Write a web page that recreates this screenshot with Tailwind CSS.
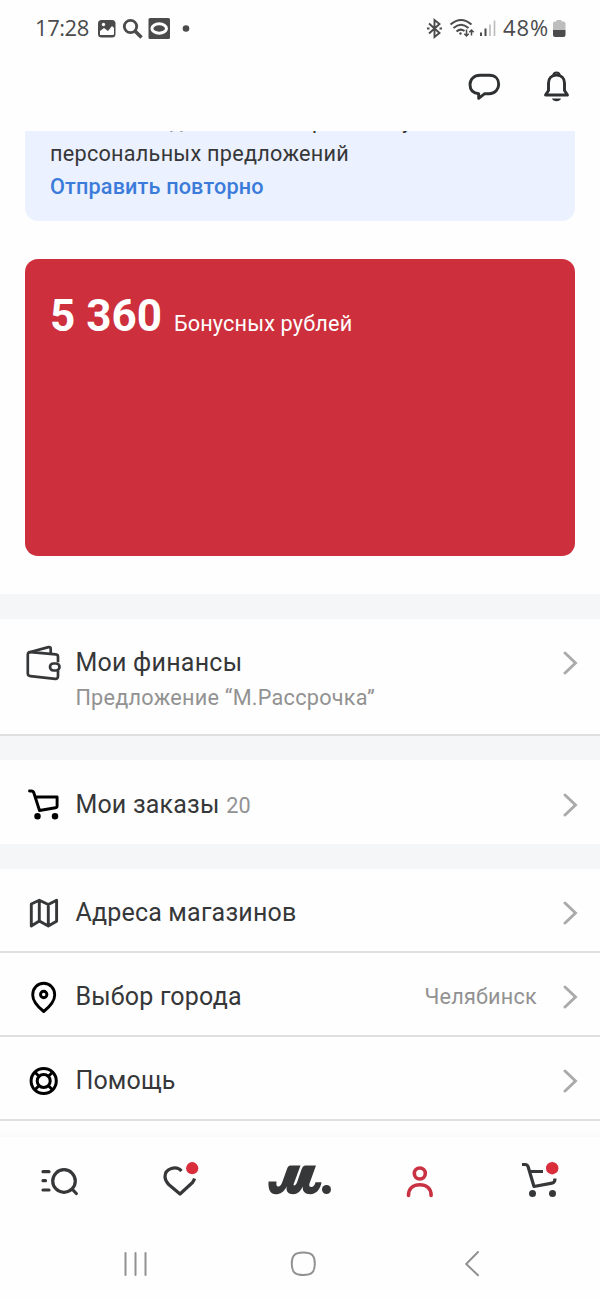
<!DOCTYPE html>
<html lang="ru"><head><meta charset="utf-8"><title>Профиль</title>
<script src="https://cdn.jsdelivr.net/npm/@tailwindcss/browser@4"></script></head>
<body class="bg-[#fefefe]">
<div class="w-[600px] h-[1299px] overflow-hidden flex flex-col font-['Roboto',sans-serif] text-[#363739]">
  <header class="h-[131px] shrink-0">
    <div class="h-14 pt-px flex items-center justify-between pl-[35px] pr-[33px] text-[#4b4b4c]">
      <div class="flex items-center">
        <span class="w-[54px] -mt-[3px] whitespace-nowrap font-['Open_Sans',sans-serif] text-[22px] leading-7 tracking-[-0.45px]">17:28</span>
        <svg class="ml-2 w-[94px] h-7" viewBox="97 15 94 28" fill="none">
          <rect x="98" y="20" width="17.5" height="17.5" rx="3.5" fill="#4b4b4c"/>
          <path d="M100 35V31l4-3 4 3 4-5 2 2v6q0 1-1 1z" fill="#fefefe"/><circle cx="103.500" cy="24.500" r="1.700" fill="#fefefe"/>
          <circle cx="130.500" cy="26.500" r="6.200" stroke="#4b4b4c" stroke-width="2.800"/><path d="M135 31l6.500 6.500" stroke="#4b4b4c" stroke-width="3.600"/>
          <rect x="148.500" y="18" width="21.500" height="21" rx="1.500" fill="#4b4b4c"/>
          <ellipse cx="159.200" cy="28.500" rx="7.300" ry="4.700" stroke="#fefefe" stroke-width="3"/>
          <circle cx="186" cy="28.500" r="3.300" fill="#4b4b4c"/>
        </svg>
      </div>
      <div class="flex items-center">
        <svg class="w-[76px] h-7" viewBox="426 15 76 28" fill="none" stroke="#4b4b4c" stroke-width="1.900">
          <path d="M429 23.500l10.500 9.500-5 4v-17l5 4-10.500 9.500"/><path d="M427 28.500h2.500M439.500 28.500h2.500"/>
          <path d="M450.500 24.500q10.500-9 21 0M453.500 28q7.500-6.500 15 0M456.500 31.500q4-3.500 8-.5" stroke-width="2"/><circle cx="460.500" cy="33.500" r="1.200" fill="#4b4b4c" stroke="none"/>
          <path d="M466.500 29.500v6.500m-2.200-2.200l2.200 2.200 2.200-2.200M471.500 35.500V30m-2.200 2.200l2.200-2.200 2.200 2.200" stroke-width="1.500"/>
          <path d="M481 36v-3.500M485.500 36v-7.500" stroke-width="2"/><path d="M490 36V24.500M494.500 36V20.500" stroke="#bbb" stroke-width="1.600"/>
        </svg>
        <span class="ml-px w-[49px] -mt-[3px] whitespace-nowrap font-['Open_Sans',sans-serif] text-[22px] leading-7 tracking-[0.9px]">48%</span>
        <svg class="w-[15px] h-7" viewBox="552 15 15 28"><path d="M556.500 20h5v1.500h2q2 0 2 2V30h-12.500v-6.500q0-2 2-2h1.500z" fill="#bdbdbd"/><path d="M553 30h12.500v5q0 2-2 2H555q-2 0-2-2z" fill="#4b4b4c"/></svg>
      </div>
    </div>
    <div class="h-[75px] flex justify-end pr-[28px]">
      <svg class="w-[104px] h-[40px] mt-3" viewBox="468 68 104 40" fill="none" stroke="#2f3032" stroke-width="2.900" stroke-linejoin="round">
        <path d="M480 75.300h9.500c6 0 9.200 4 9.200 8.900 0 5-3.500 9.500-9.500 9.500h-4.500l-6 4.600V93.700c-6-.7-8.700-4.500-8.700-9.300 0-5 4-9.100 10-9.100z"/>
        <path d="M545.500 95l3-4.500V83c0-4.800 3.200-8 8-8s8 3.200 8 8v7.500l3 4.500z"/><path d="M553.500 75q0-2.500 3-2.500t3 2.500" stroke-width="2"/><path d="M552 98.500h9q-1 2.700-4.500 2.700t-4.500-2.700z" fill="#2f3032" stroke="none"/>
      </svg>
    </div>
  </header>
  <section class="h-[90px] shrink-0 overflow-hidden mx-[25px] px-[25px] rounded-b-[13px] bg-[#ebf1fe] text-[21.670px] leading-[33px]">
    <div class="-mt-[27px] flex"><span class="ml-[120px] w-[142px]">д</span><span class="w-[90px]">р</span><span>у</span></div>
    <p class="tracking-[0.25px]">персональных предложений</p>
    <p class="font-medium tracking-[0.15px] text-[#3b7bda]">Отправить повторно</p>
  </section>
  <section class="h-[297px] shrink-0 mx-[25px] mt-[38px] mb-[38px] px-[25px] pt-[31px] rounded-[13px] bg-[#cd303c] text-white flex items-baseline content-start">
    <span class="text-[44px] leading-[52px] font-bold">5 360</span><span class="ml-[12px] text-[21.670px] tracking-[0.15px]">Бонусных рублей</span>
  </section>
  <div class="h-[25px] shrink-0 bg-[#f5f6f8]"></div>
  <section class="h-[117px] shrink-0 border-b-2 border-[#dedfe1] flex pl-[25px] pr-[22px] pt-[27px]">
    <svg class="w-[38px] h-9 -mt-px" viewBox="25 645 38 36" fill="none" stroke="#363739" stroke-width="2.700" stroke-linejoin="round"><path d="M27.800 654.500c0-1.800 1.200-2.500 3-2.300l25 2.200c1.600.2 2.200 1 2.200 2.300v5.500M58 671v5.200c0 2-1 2.800-2.800 2.600l-24.700-2.600c-1.800-.2-2.700-1-2.700-2.700v-19"/><path d="M28.500 652.500l20-5.400c1.500-.3 2.200.5 2.200 1.700v4.500"/><rect x="50" y="663.500" width="9.500" height="7" rx="3.500"/></svg>
    <div class="ml-[12.400px] flex-1"><p class="text-[25px] leading-[34px] tracking-[0.25px]">Мои финансы</p><p class="text-[21.670px] leading-9 tracking-[0.24px] text-[#929292]">Предложение “М.Рассрочка”</p></div>
    <svg class="w-4 h-6 mt-[5px]" viewBox="0 0 16 24" fill="none" stroke="#aaa" stroke-width="2.900" stroke-linecap="round"><path d="M3 2l10.500 10L3 22"/></svg>
  </section>
  <div class="h-[24px] shrink-0 bg-[#f5f6f8]"></div>
  <section class="h-[84px] shrink-0 pt-[5px] flex items-center pl-[25px] pr-[22px]">
    <svg class="w-[38px] h-9" viewBox="25 786 38 36" fill="none" stroke="#000" stroke-width="2.900" stroke-linecap="round" stroke-linejoin="round"><path d="M29.500 790h2c1.300 0 2 .7 2.400 2l5.600 17.500 16-2.700c1-.2 1.600-.8 1.600-1.800V796H35.500"/><circle cx="37.500" cy="815.300" r="1.800" fill="#000"/><circle cx="55" cy="815.300" r="1.800" fill="#000"/></svg>
    <p class="ml-[12.400px] flex-1 pt-px text-[25px] leading-[34px] tracking-[0.2px]">Мои заказы<span class="ml-[6.500px] text-[21.670px] text-[#929292]">20</span></p>
    <svg class="w-4 h-6" viewBox="0 0 16 24" fill="none" stroke="#aaa" stroke-width="2.900" stroke-linecap="round"><path d="M3 2l10.500 10L3 22"/></svg>
  </section>
  <div class="h-[25px] shrink-0 bg-[#f5f6f8]"></div>
  <section class="h-[83.500px] shrink-0 border-b-2 border-[#e0e0e2] pt-[6px] flex items-center pl-[25px] pr-[22px]">
    <svg class="w-[38px] h-9" viewBox="25 895 38 36" fill="none" stroke="#363739" stroke-width="2.900" stroke-linejoin="round"><path d="M31.300 904l8-3.800 9 4.300 8.300-4.300v21l-8.300 4.800-9-5-8 5zM39.300 900.500v20.500M48.300 904.500v21"/></svg>
    <p class="ml-[12.400px] flex-1 text-[25px] leading-[34px] tracking-[0.2px]">Адреса магазинов</p>
    <svg class="w-4 h-6" viewBox="0 0 16 24" fill="none" stroke="#aaa" stroke-width="2.900" stroke-linecap="round"><path d="M3 2l10.500 10L3 22"/></svg>
  </section>
  <section class="h-[84px] shrink-0 border-b-2 border-[#e0e0e2] pt-[6px] flex items-center pl-[25px] pr-[22px]">
    <svg class="w-[38px] h-9" viewBox="25 979 38 36" fill="none" stroke="#000" stroke-width="2.900" stroke-linejoin="round"><path d="M43.700 1011.500c-6-4.800-11-10.500-11-16.500 0-7 5-11.700 11-11.700s11 4.700 11 11.700c0 6-5 11.700-11 16.500z"/><circle cx="43.700" cy="994.500" r="3.200"/></svg>
    <p class="ml-[12.400px] flex-1 text-[25px] leading-[34px] tracking-[0.2px]">Выбор города</p>
    <span class="mr-[25px] pt-[2px] text-[21.670px] tracking-[0.22px] text-[#929292]">Челябинск</span>
    <svg class="w-4 h-6" viewBox="0 0 16 24" fill="none" stroke="#aaa" stroke-width="2.900" stroke-linecap="round"><path d="M3 2l10.500 10L3 22"/></svg>
  </section>
  <section class="h-[84px] shrink-0 border-b-2 border-[#e0e0e2] pt-[6px] flex items-center pl-[25px] pr-[22px]">
    <svg class="w-[38px] h-9" viewBox="25 1063 38 36" fill="none" stroke="#000" stroke-width="3"><circle cx="43.700" cy="1081" r="12.600"/><circle cx="43.700" cy="1081" r="6.500"/><path d="M34.700 1072l4.500 4.500M52.700 1072l-4.500 4.500M34.700 1090l4.500-4.500M52.700 1090l-4.500-4.500"/></svg>
    <p class="ml-[12.400px] flex-1 text-[25px] leading-[34px] tracking-[0.15px]">Помощь</p>
    <svg class="w-4 h-6" viewBox="0 0 16 24" fill="none" stroke="#aaa" stroke-width="2.900" stroke-linecap="round"><path d="M3 2l10.500 10L3 22"/></svg>
  </section>
  <div class="h-4 shrink-0 bg-linear-to-b from-[#fefefe] from-60% to-[#f9f9f9]"></div>
  <nav class="h-[93px] shrink-0">
    <svg class="w-[600px] h-[93px]" viewBox="0 1137 600 93" fill="none" stroke="#363739" stroke-width="3.200" stroke-linecap="round" stroke-linejoin="round">
      <path d="M43 1171.700h6M43 1180.700h2.500M43 1190h6"/><circle cx="64" cy="1181" r="11.300"/><path d="M72.500 1189.500l3.800 4"/>
      <path d="M181.500 1171c-5-5.500-16.500-3-16.500 5.800 0 3.500 2 6 4 8l11 9.200 12.500-11.500q1.500-2 2-4" stroke-linecap="butt"/><circle cx="192.200" cy="1168.200" r="6.100" fill="#d92d3c" stroke="none"/>
      <path d="M269 1181.500h7.500c-.5 3.500 0 5 1.700 5 1.800 0 3.300-2 4.300-5l4.500-12.500q1-3.500 3.500-3.500h10l-6.800 18.500c-.7 2.200 1.800 2.200 3.300-1.500l4.500-13q1.300-4 4-4h10.500l-6.500 18c-.8 2.700.3 3.500 1.800 3.500 2 0 3.500-1.800 4.200-4.800h6c-1 7-5.500 12-11 12-5.800 0-8.300-3-7.600-7.700-2.600 5-5.400 7.700-9.700 7.700-5.200 0-7.500-3.200-6.400-8-2.700 5.500-6.300 8-11.100 8-4.900 0-7.700-3.700-7.200-12.700z" fill="#363739" stroke="none"/><circle cx="326.500" cy="1189.500" r="4.500" fill="#363739" stroke="none"/>
      <g stroke="#c93242" stroke-width="3.600"><circle cx="419.800" cy="1173.500" r="5.500"/><path d="M408.500 1195.500c0-7.500 5-10.700 11.300-10.700s11.300 3.200 11.300 10.700"/></g>
      <path d="M522 1164.500h3q2.500 0 3.200 2.500l5.800 19.500 18-3.400q3-.5 3-4.600M530 1171.500h13" stroke-linecap="butt"/><g fill="#363739" stroke="none"><circle cx="532.500" cy="1193.500" r="3.500"/><circle cx="552.500" cy="1193.500" r="3.500"/></g><circle cx="552.200" cy="1168.200" r="6.200" fill="#d92d3c" stroke="none"/>
    </svg>
  </nav>
  <footer class="flex-1"><svg class="w-[600px] h-[69px]" viewBox="0 1230 600 69" fill="none" stroke="#919191" stroke-width="2" stroke-linecap="round"><path d="M125.500 1253v22M135.500 1253v22M145.500 1253v22M478 1252l-11.800 12 11.800 11.300"/><path d="M303.300 1252.500c8.500 0 11.500 3 11.500 11.300s-3 11.200-11.500 11.200-11.500-3-11.500-11.200 3-11.300 11.500-11.300z"/></svg></footer>
</div>
</body></html>
